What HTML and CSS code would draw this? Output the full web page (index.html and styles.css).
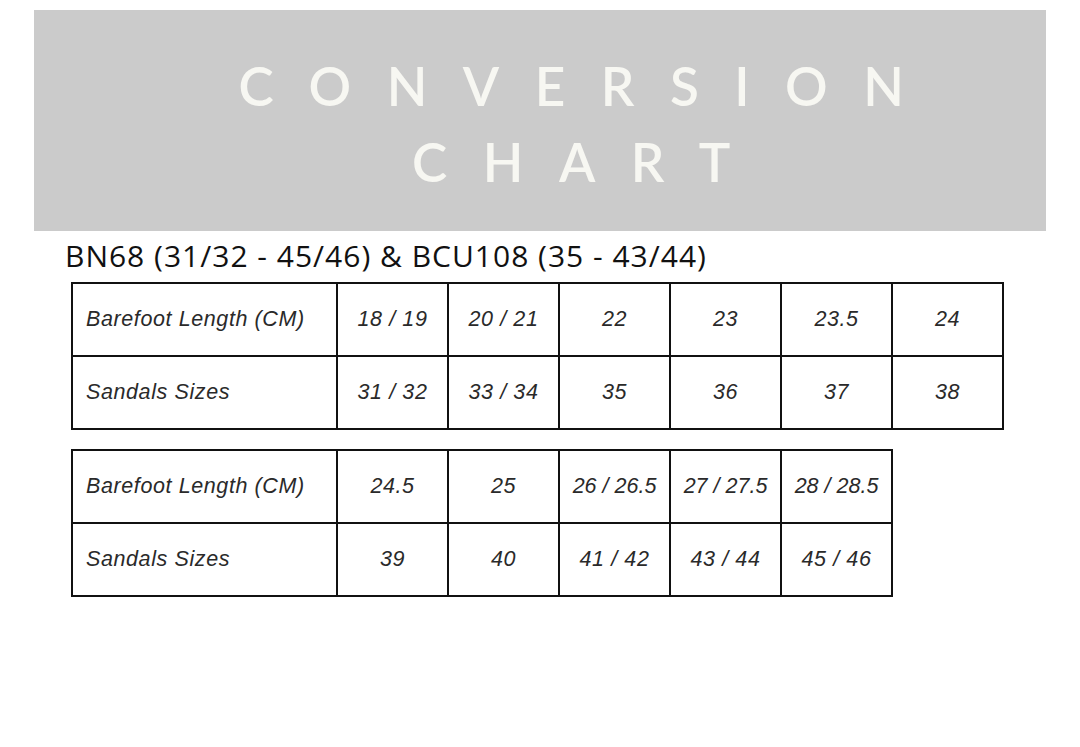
FILE: index.html
```html
<!DOCTYPE html>
<html>
<head>
<meta charset="utf-8">
<link rel="stylesheet" href="styles.css">
</head>
<body>
<div class="page">
  <div class="banner">
    <div class="title">CONVERSION</div>
    <div class="title">CHART</div>
  </div>
  <h1 class="heading">BN68 (31/32 - 45/46) &amp; BCU108 (35 - 43/44)</h1>
  <table class="chart">
    <tr><td class="label">Barefoot Length (CM)</td><td>18 / 19</td><td>20 / 21</td><td>22</td><td>23</td><td>23.5</td><td>24</td></tr>
    <tr><td class="label">Sandals Sizes</td><td>31 / 32</td><td>33 / 34</td><td>35</td><td>36</td><td>37</td><td>38</td></tr>
  </table>
  <table class="chart second">
    <tr><td class="label">Barefoot Length (CM)</td><td>24.5</td><td>25</td><td class="tight">26 / 26.5</td><td class="tight">27 / 27.5</td><td class="tight">28 / 28.5</td></tr>
    <tr><td class="label">Sandals Sizes</td><td>39</td><td>40</td><td>41 / 42</td><td>43 / 44</td><td>45 / 46</td></tr>
  </table>
</div>
</body>
</html>
```
FILE: styles.css
```css
html, body {
  margin: 0;
  padding: 0;
  background: #ffffff;
}
.page {
  padding: 10px 34px 0 34px;
}
.banner {
  height: 221px;
  background: #cbcbcb;
  display: flex;
  flex-direction: column;
  align-items: center;
  justify-content: flex-start;
  padding-top: 38px;
  box-sizing: border-box;
  padding-left: 98px;
}
.title {
  font-family: "Lato", "Open Sans", sans-serif;
  font-weight: 600;
  font-size: 53px;
  line-height: 76px;
  letter-spacing: 35.5px;
  color: #f7f7f2;
}
.heading {
  font-family: "Open Sans", "Noto Sans", sans-serif;
  font-weight: 400;
  font-size: 30px;
  line-height: 38px;
  letter-spacing: 1px;
  color: #111;
  margin: 6px 0 0 31px;
}
.chart {
  border-collapse: collapse;
  margin: 7px 0 0 37px;
  font-family: "Liberation Sans", Arial, sans-serif;
  font-style: italic;
  font-size: 21.5px;
  letter-spacing: 0.6px;
  color: #2a2a2a;
}
.chart.second {
  margin-top: 19px;
}
.chart td {
  border: 2.5px solid #111;
  width: 105px;
  height: 71px;
  padding: 0 2px;
  text-align: center;
  white-space: nowrap;
}
.chart td.label {
  width: 248px;
  text-align: left;
  padding-left: 13px;
}
.chart td.tight {
  letter-spacing: 0;
  padding: 0;
}
```
